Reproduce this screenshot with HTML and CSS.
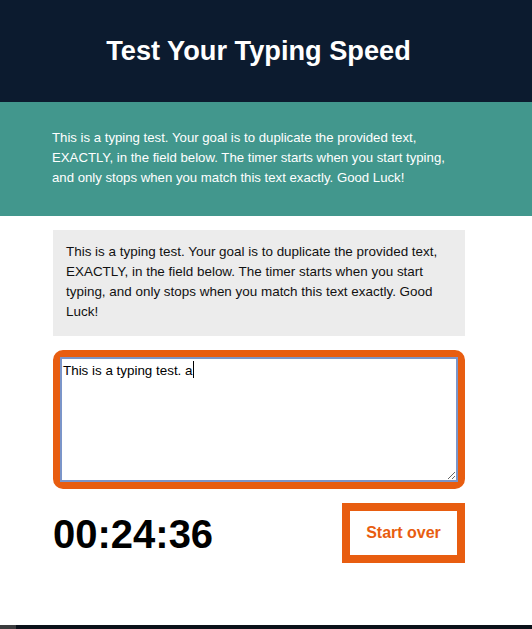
FILE: index.html
```html
<!DOCTYPE html>
<html>
<head>
<meta charset="utf-8">
<link rel="stylesheet" href="styles.css">
</head>
<body>
<header class="masthead">
  <h1 class="title">Test Your Typing Speed</h1>
</header>
<section class="intro">
  <p class="intro-text">This is a typing test. Your goal is to duplicate the provided text,<br>EXACTLY, in the field below. The timer starts when you start typing,<br>and only stops when you match this text exactly. Good Luck!</p>
</section>
<main class="test">
  <div class="origin">
    <p class="origin-text">This is a typing test. Your goal is to duplicate the provided text, EXACTLY, in the field below. The timer starts when you start typing, and only stops when you match this text exactly. Good Luck!</p>
  </div>
  <div class="area-wrap">
    <textarea class="area">This is a typing test. a</textarea>
    <span class="caret"></span>
  </div>
  <div class="meta">
    <div class="timer">00:24:36</div>
    <button class="reset">Start over</button>
  </div>
</main>
<footer class="foot"><span class="foot-tab"></span></footer>
</body>
</html>
```
FILE: styles.css
```css
* { box-sizing: border-box; }
html, body { margin: 0; padding: 0; }
body {
  font-family: "Liberation Sans", Arial, sans-serif;
  background: #fff;
  color: #000;
  width: 532px;
  height: 629px;
  overflow: hidden;
  display: flex;
  flex-direction: column;
}
.masthead {
  background: #0c1b2f;
  height: 102px;
  padding-right: 15px;
  display: flex;
  align-items: center;
  justify-content: center;
}
.title {
  margin: 0;
  color: #fff;
  font-size: 27.2px;
  font-weight: bold;
}
.intro {
  background: #42978d;
  height: 114px;
  padding: 26px 0 0 52px;
}
.intro-text {
  margin: 0;
  color: #fff;
  font-size: 13.2px;
  line-height: 20px;
  white-space: nowrap;
}
.test {
  width: 412px;
  margin: 14px 0 0 53px;
  flex: 1;
}
.origin {
  background: #ececec;
  height: 106px;
  padding: 12px 13px;
}
.origin-text {
  margin: 0;
  font-size: 13.45px;
  line-height: 20px;
  color: #111;
}
.area-wrap {
  position: relative;
  margin-top: 14px;
  height: 139px;
  border: 7px solid #e85d10;
  border-radius: 10px;
  display: flex;
}
.area {
  flex: 1;
  margin: 0;
  border: 2px solid #7b95c9;
  padding: 3px 1px;
  font-family: "Liberation Sans", Arial, sans-serif;
  font-size: 13.4px;
  line-height: 17px;
  color: #000;
  resize: both;
  outline: none;
}
.caret {
  position: absolute;
  left: 133px;
  top: 4px;
  width: 1px;
  height: 17px;
  background: #000;
}
.meta {
  margin-top: 14px;
  display: flex;
  justify-content: space-between;
  align-items: flex-start;
}
.timer {
  margin-top: 9px;
  font-size: 40px;
  font-weight: bold;
  line-height: 44px;
}
.reset {
  width: 123px;
  height: 60px;
  border: 8px solid #e85d10;
  background: #fff;
  color: #e85d10;
  font-family: "Liberation Sans", Arial, sans-serif;
  font-size: 16px;
  font-weight: bold;
  padding: 0;
}
.foot {
  height: 4px;
  background: #0b1119;
  display: flex;
}
.foot-tab {
  width: 16px;
  background: #3a3b3d;
}
```
